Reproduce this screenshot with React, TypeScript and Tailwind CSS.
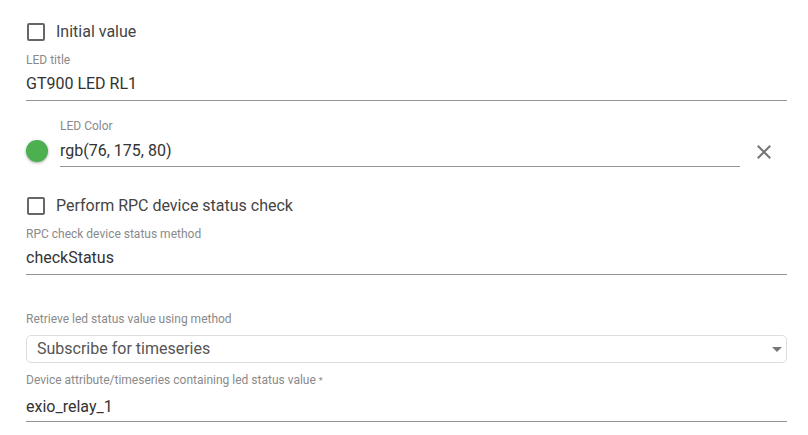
import React from "react";

function Checkbox({ label }: { label: string }) {
  return (
    <div className="flex h-[24px] items-center">
      <div className="ml-[1px] h-[18px] w-[18px] rounded-[2px] border-2 border-[#666666]" />
      <span className="ml-[11px] text-[16px] leading-[20px] text-[#444444]">{label}</span>
    </div>
  );
}

export default function App() {
  return (
    <div
      className="h-[435px] w-[808px] overflow-hidden bg-white pl-[26px] pr-[21px] pt-[20px]"
      style={{ fontFamily: "Roboto, 'Noto Sans', sans-serif" }}
    >
      <Checkbox label="Initial value" />

      <div className="mt-[10px] border-b border-[#949494] pb-[6px]">
        <div className="text-[12px] leading-[12px] text-[#8a8a8a]">LED title</div>
        <div className="mt-[8px] text-[16px] leading-[20px] text-[#333333]">GT900 LED RL1</div>
      </div>

      <div className="mt-[19px] flex items-end">
        <div className="mb-[5px] flex h-[22px] w-[22px] shrink-0 items-center justify-center self-end">
          <div className="h-[22px] w-[22px] rounded-full bg-[#4caf50] shadow-[0_1px_3px_rgba(0,0,0,0.35)]" />
        </div>
        <div className="ml-[12px] flex-1 border-b border-[#949494] pb-[5px]">
          <div className="text-[12px] leading-[12px] text-[#8a8a8a]">LED Color</div>
          <div className="mt-[9px] text-[16px] leading-[20px] text-[#333333]">rgb(76, 175, 80)</div>
        </div>
        <div className="mb-[3px] ml-[12px] mr-[11px] flex h-[24px] w-[24px] items-center justify-center">
          <svg viewBox="0 0 24 24" width="24" height="24" fill="#757575">
            <path d="M19 6.41L17.59 5 12 10.59 6.41 5 5 6.41 10.59 12 5 17.59 6.41 19 12 13.41 17.59 19 19 17.59 13.41 12z" />
          </svg>
        </div>
      </div>

      <div className="mt-[27px]">
        <Checkbox label="Perform RPC device status check" />
      </div>

      <div className="mt-[10px] border-b border-[#949494] pb-[6px]">
        <div className="text-[12px] leading-[12px] text-[#8a8a8a]">RPC check device status method</div>
        <div className="mt-[8px] text-[16px] leading-[20px] text-[#333333]">checkStatus</div>
      </div>

      <div className="mt-[38px] text-[12px] leading-[12px] text-[#8a8a8a]">Retrieve led status value using method</div>
      <div className="mt-[10px] flex h-[28px] items-center justify-between rounded-[5px] border border-[#dddddd] pl-[10px] pr-[4px]">
        <span className="text-[16px] leading-[20px] text-[#555555]">Subscribe for timeseries</span>
        <svg width="10" height="5" viewBox="0 0 10 5">
          <path d="M0 0 L10 0 L5 5 Z" fill="#777777" />
        </svg>
      </div>

      <div className="mt-[11px] border-b border-[#949494] pb-[4px]">
        <div className="text-[12px] leading-[12px] text-[#8a8a8a]">
          Device attribute/timeseries containing led status value <span className="text-[9px]">*</span>
        </div>
        <div className="mt-[10px] text-[16px] leading-[20px] text-[#333333]">exio_relay_1</div>
      </div>
    </div>
  );
}
